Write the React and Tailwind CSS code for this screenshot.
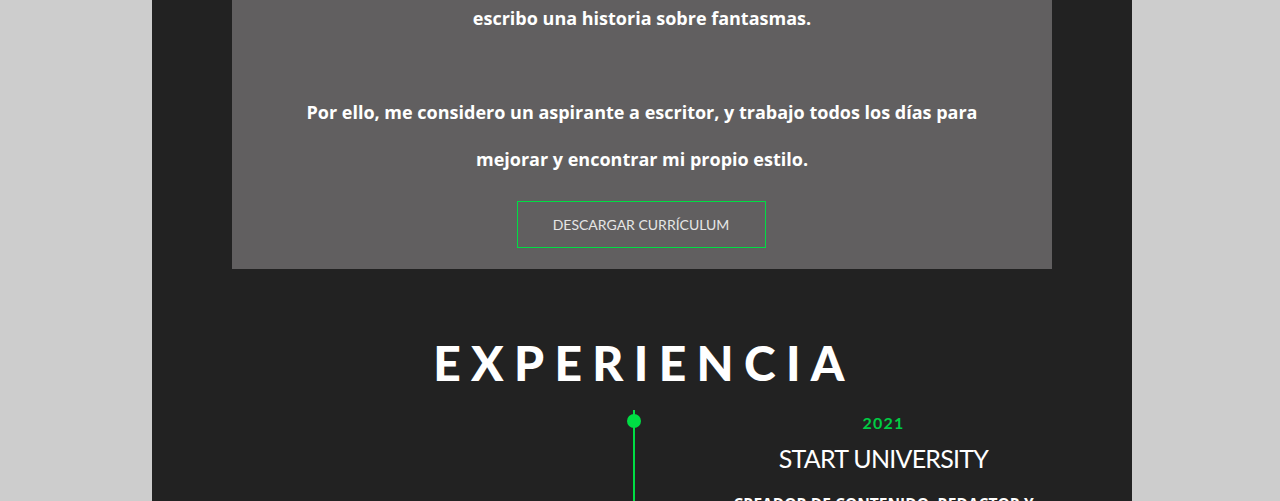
import React from 'react';

const TEXT_FONT = { fontFamily: 'Lato, "Open Sans", sans-serif' };
const BODY_FONT = { fontFamily: '"Open Sans", Lato, sans-serif' };

export default function App() {
    return (
        <div className="min-h-screen bg-[#cdcdcd] pl-[152px] overflow-hidden" style={TEXT_FONT}>
            <div className="w-[980px] bg-[#222222] pb-20">
                {/* Tarjeta sobre mí */}
                <div className="mx-[80px] bg-[#615f60] text-center text-white -mt-[5px] pb-[21px]">
                    <p className="font-bold text-[18px] leading-[47px]" style={BODY_FONT}>
                        escribo una historia sobre fantasmas.
                        <br />
                        <br />
                        Por ello, me considero un aspirante a escritor, y trabajo todos los días para
                        <br />
                        mejorar y encontrar mi propio estilo.
                    </p>
                    <button className="mt-[18px] -ml-[2px] w-[249px] h-[47px] border border-[#00dd44] text-[14px] text-[#e6e6e6]">
                        DESCARGAR CURRÍCULUM
                    </button>
                </div>

                {/* Experiencia */}
                <h2 className="mt-[70px] text-center text-white font-black text-[48px] leading-[48px] tracking-[0.215em] pl-[4px]">
                    EXPERIENCIA
                </h2>

                <div className="mt-[23px] flex">
                    <div className="w-[481px]" />
                    <div className="relative w-[2px] bg-[#00dd44] min-h-[200px]">
                        <span className="absolute left-1/2 top-[4px] -translate-x-1/2 w-[14px] h-[14px] rounded-full bg-[#00dd44]" />
                    </div>
                    <div className="flex-1 text-center text-white">
                        <p className="mt-[5px] text-[16px] leading-[16px] font-bold tracking-[0.08em] text-[#00cc44]">2021</p>
                        <h3 className="mt-[11px] text-[25px] leading-[32px] tracking-[-0.03em]">START UNIVERSITY</h3>
                        <p className="mt-[18px] text-[15.5px] leading-[24px] font-bold" style={BODY_FONT}>
                            CREADOR DE CONTENIDO, REDACTOR Y
                            <br />
                            EDITOR
                        </p>
                    </div>
                </div>
            </div>
        </div>
    );
}
